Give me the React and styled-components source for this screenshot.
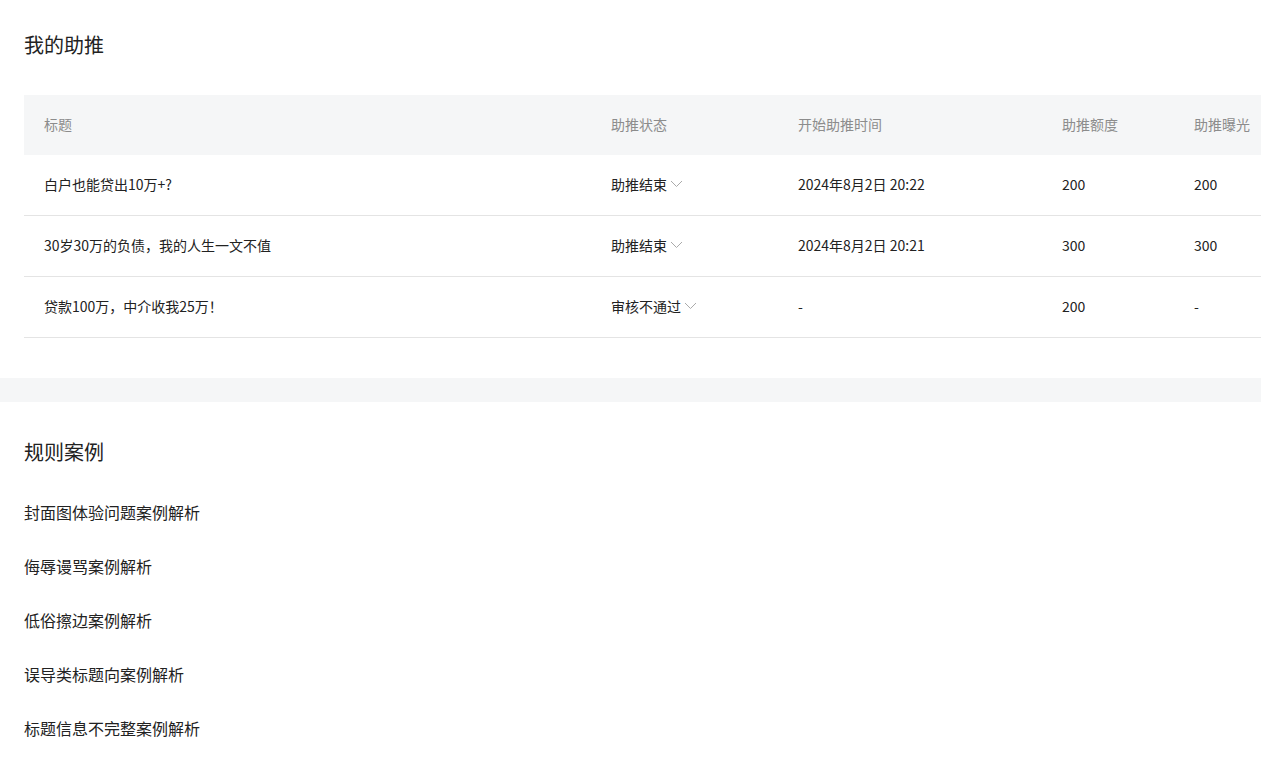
import React from "react";
import styled, { createGlobalStyle } from "styled-components";

const GlobalStyle = createGlobalStyle`
  html, body {
    margin: 0;
    padding: 0;
    background: #fff;
  }
  body {
    font-family: "Noto Sans CJK SC", "Noto Sans", sans-serif;
    color: #222;
    overflow: hidden;
  }
`;

const rows = [
  { title: "白户也能贷出10万+?", status: "助推结束", time: "2024年8月2日 20:22", quota: "200", views: "200" },
  { title: "30岁30万的负债，我的人生一文不值", status: "助推结束", time: "2024年8月2日 20:21", quota: "300", views: "300" },
  { title: "贷款100万，中介收我25万！", status: "审核不通过", time: "-", quota: "200", views: "-" },
];

const cases = [
  "封面图体验问题案例解析",
  "侮辱谩骂案例解析",
  "低俗擦边案例解析",
  "误导类标题向案例解析",
  "标题信息不完整案例解析",
];

const columns = [
  { key: "title", label: "标题", width: 567 },
  { key: "status", label: "助推状态", width: 187 },
  { key: "time", label: "开始助推时间", width: 264 },
  { key: "quota", label: "助推额度", width: 132 },
  { key: "views", label: "助推曝光", width: 160 },
];

const Page = styled.div`
  width: 100%;
`;

const Section = styled.section`
  padding: ${(p) => p.$padding};
`;

const SectionTitle = styled.h2`
  margin: 0;
  font-size: 20px;
  line-height: 28px;
  font-weight: 400;
  color: #222;
`;

const TableWrap = styled.div`
  margin-top: 36px;
  margin-right: -24px;
  overflow: hidden;
`;

const Table = styled.table`
  width: 1310px;
  border-collapse: collapse;
  table-layout: fixed;
`;

const HeadCell = styled.th`
  height: 58px;
  padding: 0 0 2px 20px;
  background: #f5f6f7;
  text-align: left;
  font-size: 14px;
  font-weight: 400;
  color: #8c8c8c;
  white-space: nowrap;
`;

const Cell = styled.td`
  height: 58px;
  padding: 0 0 2px 20px;
  border-bottom: 1px solid #e4e4e4;
  font-size: 14px;
  color: #222;
  white-space: nowrap;
`;

const Status = styled.span`
  display: inline-flex;
  align-items: center;
  gap: 3px;
`;

const Band = styled.div`
  height: 24px;
  background: #f5f6f7;
`;

const CaseList = styled.ul`
  list-style: none;
  margin: 34px 0 0;
  padding: 0;
  display: flex;
  flex-direction: column;
  gap: 30px;
`;

const CaseItem = styled.li`
  font-size: 16px;
  line-height: 24px;
  color: #222;
  cursor: pointer;
`;

const Chevron = () => (
  <svg width="13" height="8" viewBox="0 0 13 8" fill="none">
    <polyline points="1,1 6.5,6.5 12,1" stroke="#aaaaaa" strokeWidth="1" />
  </svg>
);

export default function App() {
  return (
    <Page>
      <GlobalStyle />
      <Section $padding="31px 24px 40px">
        <SectionTitle>我的助推</SectionTitle>
        <TableWrap>
          <Table>
            <colgroup>
              {columns.map((c) => (
                <col key={c.key} style={{ width: c.width }} />
              ))}
            </colgroup>
            <thead>
              <tr>
                {columns.map((c) => (
                  <HeadCell key={c.key}>{c.label}</HeadCell>
                ))}
              </tr>
            </thead>
            <tbody>
              {rows.map((r) => (
                <tr key={r.title}>
                  <Cell>{r.title}</Cell>
                  <Cell>
                    <Status>
                      {r.status}
                      <Chevron />
                    </Status>
                  </Cell>
                  <Cell>{r.time}</Cell>
                  <Cell>{r.quota}</Cell>
                  <Cell>{r.views}</Cell>
                </tr>
              ))}
            </tbody>
          </Table>
        </TableWrap>
      </Section>
      <Band />
      <Section $padding="36px 24px 24px">
        <SectionTitle>规则案例</SectionTitle>
        <CaseList>
          {cases.map((c) => (
            <CaseItem key={c}>{c}</CaseItem>
          ))}
        </CaseList>
      </Section>
    </Page>
  );
}
